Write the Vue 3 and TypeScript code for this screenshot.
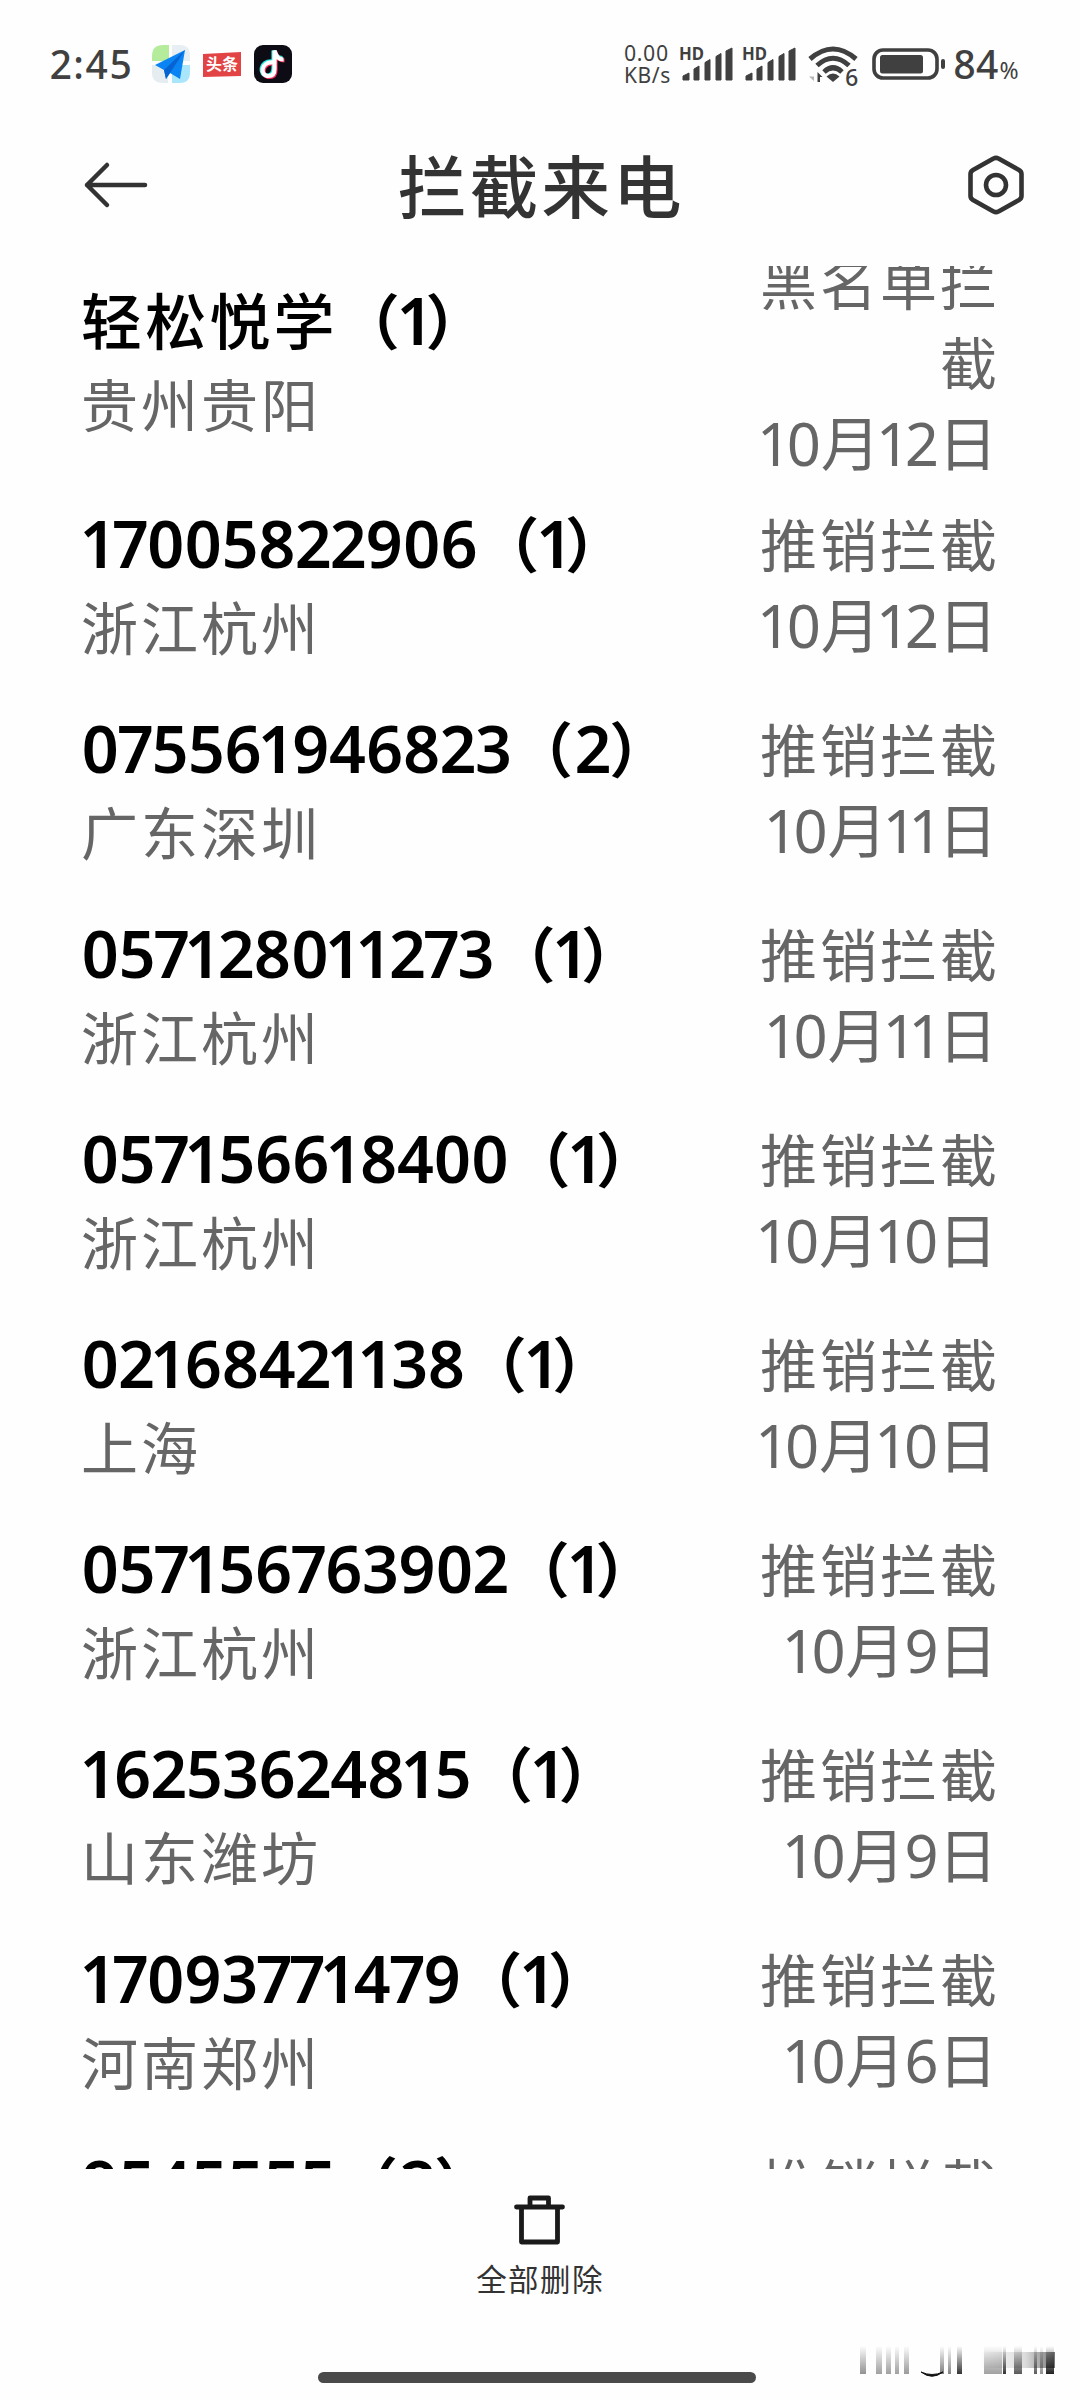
<script setup lang="ts">
interface Call {
  name: string
  count: number
  place: string
  reason: string
  date: string
  contact?: boolean
}

const calls: Call[] = [
  { name: '轻松悦学', count: 1, place: '贵州贵阳', reason: '黑名单拦截', date: '10月12日', contact: true },
  { name: '17005822906', count: 1, place: '浙江杭州', reason: '推销拦截', date: '10月12日' },
  { name: '075561946823', count: 2, place: '广东深圳', reason: '推销拦截', date: '10月11日' },
  { name: '057128011273', count: 1, place: '浙江杭州', reason: '推销拦截', date: '10月11日' },
  { name: '057156618400', count: 1, place: '浙江杭州', reason: '推销拦截', date: '10月10日' },
  { name: '02168421138', count: 1, place: '上海', reason: '推销拦截', date: '10月10日' },
  { name: '057156763902', count: 1, place: '浙江杭州', reason: '推销拦截', date: '10月9日' },
  { name: '16253624815', count: 1, place: '山东潍坊', reason: '推销拦截', date: '10月9日' },
  { name: '17093771479', count: 1, place: '河南郑州', reason: '推销拦截', date: '10月6日' },
  { name: '9545555', count: 2, place: '全国', reason: '推销拦截', date: '10月6日' },
]

// fading stripes along the bottom edge: left, width, grey level, opacity
const stripes: [number, number, number, number][] = [
  [0, 6, 110, 0.75], [16, 6, 110, 0.65], [26, 5, 110, 0.65], [35, 4, 110, 0.65], [44, 5, 100, 0.65],
  [80, 4, 70, 0.7], [88, 3, 80, 0.7], [97, 5, 30, 0.9], [124, 18, 110, 0.65], [143, 3, 30, 0.9],
  [154, 8, 60, 0.85], [174, 3, 50, 0.8], [180, 3, 100, 0.7], [186, 8, 20, 0.95],
]
</script>

<template>
  <div class="screen">
    <header class="status">
      <span class="time">2:45</span>
      <svg class="app" viewBox="0 0 38 38">
        <path d="M11 0H17V16H0V11Q0 0 11 0Z" fill="#b4ec9c" />
        <path d="M20 0H28Q38 0 38 11V16H20Z" fill="#e7eef4" />
        <path d="M0 20H16V38H11Q0 38 0 28Z" fill="#e6edf0" />
        <path d="M20 20H38V27Q38 38 28 38H20Z" fill="#a9e6fb" />
        <path d="M33 5L3 20L12 25L14 34L18 28L28 34Z" fill="#0b84f3" />
        <path d="M33 5L12 25L14 34L18 28Z" fill="#0663d2" />
      </svg>
      <svg class="app toutiao" viewBox="0 0 38 38">
        <path d="M0 9L38 7V31L0 32Z" fill="#e24446" />
        <text x="19" y="24.500" text-anchor="middle" class="tt">头条</text>
      </svg>
      <svg class="app" viewBox="0 0 38 38">
        <rect width="38" height="38" rx="9" fill="#0d0b14" />
        <g fill="none" stroke-width="4.2">
          <path d="M18 16.500C5.500 15.500 4.500 30.500 13.500 30.500Q19.500 30.500 19.500 23V5.500Q21.500 13 28.500 13" stroke="#25e5df" />
          <path d="M20 18.500C7.500 17.500 6.500 32 15.500 32Q21.500 32 21.500 25V7Q23.500 15.500 30.500 15.500" stroke="#f4335c" />
          <path d="M19 17.500C6.500 16.500 5.500 31 14.500 31Q20.500 31 20.500 24V5.500Q22.500 14.500 29.500 14.500" stroke="#fff" />
        </g>
      </svg>

      <div class="right">
        <div class="speed"><span>0.00</span><span>KB/s</span></div>
        <svg v-for="n in 2" :key="n" class="signal" viewBox="0 0 54 36">
          <text x="-1" y="13.5" textLength="25" lengthAdjust="spacingAndGlyphs" class="hd">HD</text>
          <path d="M3 34V30L9 27V34ZM14 34V23L19 20V34ZM25 34V16.500L30 13.500V34ZM36 34V10.500L41 7.500V34ZM46 34V5L52 2V34Z" fill="#404040" stroke="#404040" stroke-width="1" stroke-linejoin="round" />
        </svg>
        <svg class="wifi" viewBox="0 0 52 44">
          <g fill="none" stroke="#404040" stroke-width="5">
            <path d="M2 14Q25 -6 48 14" />
            <path d="M9 20.500Q25 6 41 20.500" />
            <path d="M16 27Q25 18.500 34 27" />
          </g>
          <path d="M18.500 31.500Q25 25.500 31.500 31.500L25 37Z" fill="#404040" />
          <path d="M6 27V36L1 31.500H6Z" fill="#b5b5b5" />
          <path d="M9.500 37V27L14.500 32H12V37Z" fill="#404040" />
          <text x="37" y="41" class="six">6</text>
        </svg>
        <svg class="battery" viewBox="0 0 76 34">
          <rect x="2" y="3" width="63" height="28" rx="9" fill="none" stroke="#404040" stroke-width="3.600" />
          <rect x="8" y="8" width="43" height="18.500" rx="2.500" fill="#404040" />
          <rect x="69" y="12" width="4" height="10" rx="2" fill="#404040" />
        </svg>
        <span class="level">84</span><span class="pct">%</span>
      </div>
    </header>

    <nav class="bar">
      <svg class="back" viewBox="0 0 66 50" fill="none" stroke="#333" stroke-width="4.500" stroke-linecap="round" stroke-linejoin="round">
        <path d="M62 25H4M24 5L4 25L24 45" />
      </svg>
      <h1>拦截来电</h1>
      <svg class="gear" viewBox="0 0 56 60" fill="none" stroke="#333" stroke-width="4.600" stroke-linejoin="round">
        <path d="M25.500 3.600Q28 2 30.500 3.600L51 15Q53.500 16.500 53.500 19V41Q53.500 43.500 51 45L30.500 56.400Q28 58 25.500 56.400L5 45Q2.500 43.500 2.500 41V19Q2.500 16.500 5 15Z" />
        <circle cx="28" cy="30" r="10" />
      </svg>
    </nav>

    <main class="viewport">
      <ul class="list">
        <li v-for="c in calls" :key="c.name" class="row">
          <div class="who">
            <div class="name" :class="{ one: c.name.startsWith('1') }"><span :class="{ cjk: c.contact }">{{ c.name }}</span><span class="par open">（</span><span :class="{ wide: c.count > 1 }">{{ c.count }}</span><span class="par close">）</span></div>
            <div class="place">{{ c.place }}</div>
          </div>
          <div class="info">
            <div>{{ c.reason }}</div>
            <div class="date">{{ c.date }}</div>
          </div>
        </li>
      </ul>
    </main>

    <footer class="foot">
      <svg class="trash" viewBox="0 0 52 52" fill="none" stroke="#1a1a1a" stroke-width="4.800" stroke-linejoin="round" stroke-linecap="round">
        <path d="M2.500 13H48.500M16 12V4H34.500V12M7.500 14V48H43.500V14" />
      </svg>
      <span class="del">全部删除</span>
    </footer>
    <div class="home"></div>
    <div class="stripes">
      <i v-for="s in stripes" :key="s[0]" :style="{ left: s[0] + 'px', width: s[1] + 'px', opacity: s[3], background: `linear-gradient(transparent, rgb(${s[2]},${s[2]},${s[2]}))` }"></i>
      <i class="haze"></i>
      <svg class="arc" viewBox="0 0 24 8"><path d="M1 1Q12 9.500 23 1Q12 6 1 1Z" fill="#111" stroke="#111" stroke-width="1" /></svg>
    </div>
  </div>
</template>

<style>
body { background: #fefefe; }
</style>

<style scoped>
.screen {
  position: relative;
  width: 1080px;
  height: 2400px;
  overflow: hidden;
  background: #fefefe;
  font-family: "Noto Sans", "Noto Sans CJK SC", sans-serif;
  font-feature-settings: "pnum";
  display: flex;
  flex-direction: column;
}
svg { display: block; flex: none; overflow: visible; }
.status {
  flex: none;
  height: 128px;
  box-sizing: border-box;
  padding: 0 0 0 50px;
  display: flex;
  align-items: center;
  color: #404040;
}
.time { width: 102px; font-size: 39px; font-weight: 500; letter-spacing: 1.600px; line-height: 56px; }
.app { width: 38px; height: 38px; margin-right: 13px; }
.tt { font-size: 16px; font-weight: 700; fill: #fff; }
.right { margin-left: 319px; display: flex; align-items: center; }
.speed { width: 56px; display: flex; flex-direction: column; font-size: 21px; letter-spacing: 0.600px; line-height: 22px; }
.signal { width: 54px; height: 36px; margin-right: 9px; }
.hd { font-size: 17px; font-weight: 700; fill: #404040; }
.wifi { width: 52px; height: 44px; margin: 6px 12px 0 2px; }
.six { font-size: 23px; font-weight: 500; fill: #404040; stroke: #fefefe; stroke-width: 4px; paint-order: stroke; }
.battery { width: 76px; height: 34px; margin-right: 5px; }
.level { font-size: 39px; font-weight: 500; line-height: 56px; }
.pct { font-size: 23px; line-height: 28px; margin: 11px 0 0 1px; }
.bar {
  flex: none;
  height: 138px;
  box-sizing: border-box;
  padding: 0 56px 24px 83px;
  display: flex;
  align-items: center;
}
.back { width: 66px; height: 50px; }
h1 { margin: 3px auto 0 249px; font-size: 68.500px; letter-spacing: 3.200px; font-weight: 500; line-height: 90px; color: #333; }
.gear { width: 56px; height: 60px; }
.viewport { flex: none; height: 1903px; overflow: hidden; }
.list { margin: -23px 0 0; padding: 0; list-style: none; }
.row {
  min-height: 205px;
  display: flex;
  align-items: center;
  justify-content: space-between;
  padding: 0 80px 0 81px;
}
.row:nth-child(n+2) .info { padding-bottom: 1px; }
.who { padding-bottom: 2px; white-space: nowrap; }
.name { font-size: 64.500px; font-weight: 600; font-kerning: none; letter-spacing: -0.900px; line-height: 84px; color: #000; }
.one { margin-left: 2px; }
.cjk { font-size: 61px; letter-spacing: 3.200px; font-weight: 500; }
.par { font-size: 60px; font-weight: 600; }
.open { position: relative; left: 2px; margin-right: 3px; }
.close { margin-left: -5px; }
.wide { margin: 0 4px 0 2px; }
.place { font-size: 57px; letter-spacing: 3px; line-height: 82px; color: #666; }
.info { width: 245px; text-align: right; font-size: 57px; letter-spacing: 3px; line-height: 80px; color: #666; }
.date { font-size: 59.500px; letter-spacing: -0.500px; padding-right: 3px; white-space: nowrap; }
.foot { flex: none; display: flex; flex-direction: column; align-items: center; padding-top: 25px; }
.trash { width: 52px; height: 52px; }
.del { margin-top: 10px; font-size: 30.500px; letter-spacing: 1.400px; line-height: 46px; color: #333; }
.home { position: absolute; left: 318px; top: 2372px; width: 438px; height: 11px; border-radius: 5.500px; background: #4a4a4a; }
.stripes { position: absolute; left: 860px; top: 2346px; width: 195px; height: 32px; }
.stripes i { position: absolute; top: 0; height: 28px; filter: blur(0.700px); }
.stripes .haze { left: 120px; top: 6px; width: 75px; background: linear-gradient(90deg, transparent, #0002 60%, #0008); height: 16px; }
.stripes .arc { position: absolute; left: 60px; top: 25px; width: 24px; height: 8px; }
</style>
